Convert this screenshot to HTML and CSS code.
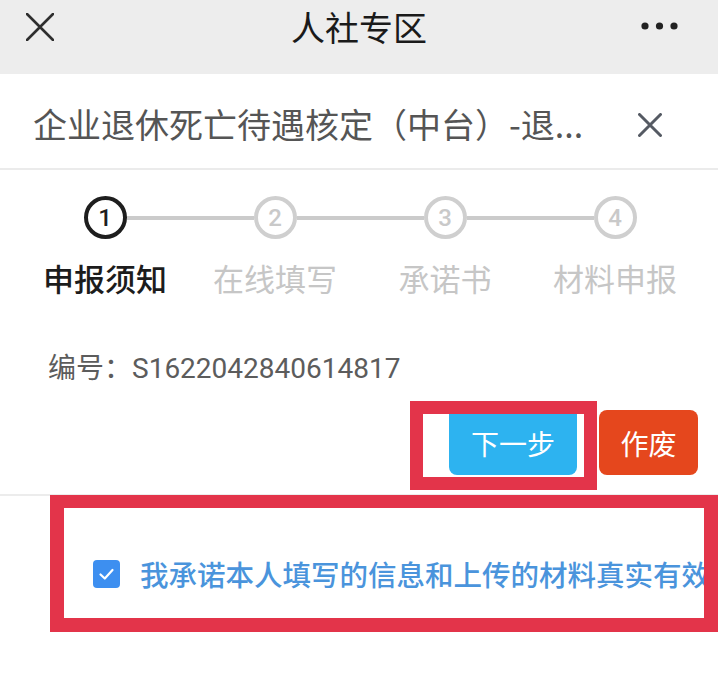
FILE: index.html
```html
<!DOCTYPE html>
<html lang="zh-CN">
<head>
<meta charset="utf-8">
<title>人社专区</title>
<link rel="stylesheet" href="styles.css">
</head>
<body>
<div class="page">
  <header class="topbar">
    <svg class="top-close" width="28" height="28" viewBox="0 0 28 28"><path d="M1 1 L27 27 M27 1 L1 27" stroke="#2e2e2e" stroke-width="2.6" stroke-linecap="round"/></svg>
    <div class="top-title">人社专区</div>
    <svg class="top-more" width="40" height="10" viewBox="0 0 40 10"><circle cx="5" cy="5" r="3.6" fill="#222"/><circle cx="19.5" cy="5" r="3.6" fill="#222"/><circle cx="34" cy="5" r="3.6" fill="#222"/></svg>
  </header>

  <div class="subhead">
    <div class="subhead-title">企业退休死亡待遇核定（中台）-退...</div>
    <svg class="sub-close" width="24" height="24" viewBox="0 0 24 24"><path d="M1.5 1.5 L22.5 22.5 M22.5 1.5 L1.5 22.5" stroke="#555a63" stroke-width="3" stroke-linecap="round"/></svg>
  </div>

  <div class="steps">
    <div class="step active">
      <div class="step-track"><span class="bar left"></span><span class="dot">1</span><span class="bar right on"></span></div>
      <div class="step-label">申报须知</div>
    </div>
    <div class="step">
      <div class="step-track"><span class="bar left on"></span><span class="dot">2</span><span class="bar right on"></span></div>
      <div class="step-label">在线填写</div>
    </div>
    <div class="step">
      <div class="step-track"><span class="bar left on"></span><span class="dot">3</span><span class="bar right on"></span></div>
      <div class="step-label">承诺书</div>
    </div>
    <div class="step">
      <div class="step-track"><span class="bar left on"></span><span class="dot">4</span><span class="bar right"></span></div>
      <div class="step-label">材料申报</div>
    </div>
  </div>

  <div class="serial">编号：<span class="num">S1622042840614817</span></div>

  <div class="actions">
    <button class="btn btn-next">下一步</button>
    <button class="btn btn-void">作废</button>
  </div>

  <div class="divider"></div>

  <div class="promise">
    <span class="checkbox"><svg width="27" height="28" viewBox="0 0 27 28"><path d="M7.5 14.5 L11.8 18.5 L19.5 10" stroke="#fff" stroke-width="2.2" fill="none" stroke-linecap="round" stroke-linejoin="round"/></svg></span>
    <span class="promise-text">我承诺本人填写的信息和上传的材料真实有效。</span>
  </div>

  <div class="mark mark-next"></div>
  <div class="mark mark-promise"></div>
</div>
</body>
</html>
```
FILE: styles.css
```css
html, body {
  margin: 0;
  padding: 0;
  background: #ffffff;
}
body {
  width: 718px;
  height: 676px;
  overflow: hidden;
  font-family: "Noto Sans CJK SC", Roboto, "Noto Sans", sans-serif;
}
.page {
  position: relative;
  width: 718px;
  height: 676px;
  overflow: hidden;
}
.topbar {
  height: 74px;
  background: #ededed;
  display: flex;
  align-items: center;
  justify-content: space-between;
  padding: 0 38px 0 26px;
  box-sizing: border-box;
  position: relative;
}
.top-close {
  margin-top: -21px;
}
.top-title {
  position: absolute;
  left: 0;
  right: 0;
  top: 5px;
  text-align: center;
  font-size: 34px;
  line-height: 44px;
  color: #1a1a1a;
  pointer-events: none;
}
.top-more {
  margin-top: -22px;
}
.subhead {
  height: 96px;
  border-bottom: 2px solid #ebebeb;
  box-sizing: border-box;
  display: flex;
  align-items: center;
  padding: 6px 56px 0 33px;
  justify-content: space-between;
}
.subhead-title {
  font-size: 34px;
  line-height: 44px;
  color: #555555;
  white-space: nowrap;
}
.sub-close {
  margin-top: 2px;
}
.steps {
  display: grid;
  grid-template-columns: repeat(4, 170px);
  padding: 26px 18px 0 20px;
}
.step {
  display: flex;
  flex-direction: column;
  align-items: center;
}
.step-track {
  display: flex;
  align-items: center;
  width: 100%;
  height: 43px;
}
.bar {
  flex: 1;
  height: 4px;
}
.bar.on {
  background: #cbcbcb;
}
.dot {
  width: 43px;
  height: 43px;
  box-sizing: border-box;
  border: 4px solid #cfcfcf;
  border-radius: 50%;
  display: flex;
  align-items: center;
  justify-content: center;
  font-family: Roboto, sans-serif;
  font-size: 24px;
  font-weight: 500;
  color: #c9c9c9;
}
.step.active .dot {
  border-color: #1e1e1e;
  color: #1e1e1e;
}
.step-label {
  margin-top: 18px;
  font-size: 31px;
  line-height: 42px;
  color: #c6c6c6;
  white-space: nowrap;
}
.step.active .step-label {
  color: #1c1c1c;
  font-weight: 500;
}
.serial {
  margin-top: 48px;
  padding-left: 48px;
  font-size: 28px;
  line-height: 38px;
  color: #5c5c5c;
}
.serial .num {
  font-family: Roboto, sans-serif;
  font-size: 28px;
}
.actions {
  display: flex;
  justify-content: flex-end;
  gap: 22px;
  padding-right: 20px;
  margin-top: 22px;
}
.btn {
  border: none;
  height: 65px;
  border-radius: 8px;
  color: #ffffff;
  font-family: "Noto Sans CJK SC", sans-serif;
  font-size: 28px;
  padding: 0;
}
.btn-next {
  width: 128px;
  background: #2db3f0;
  border-radius: 0 0 8px 8px;
}
.btn-void {
  width: 99px;
  background: #e5471d;
}
.divider {
  margin-top: 19px;
  height: 2px;
  background: #ececec;
}
.promise {
  display: flex;
  align-items: center;
  padding-left: 93px;
  margin-top: 58px;
  gap: 20px;
  white-space: nowrap;
}
.checkbox {
  width: 27px;
  height: 28px;
  border-radius: 4px;
  background: #3d8ff0;
  display: flex;
  flex: none;
}
.promise-text {
  font-size: 28.5px;
  font-weight: 500;
  color: #4a94dc;
  line-height: 40px;
}
.mark {
  position: absolute;
  border: 13px solid #e3344a;
  box-sizing: border-box;
}
.mark-next {
  left: 410px;
  top: 401px;
  width: 187px;
  height: 89px;
}
.mark-promise {
  left: 50px;
  top: 495px;
  width: 668px;
  height: 137px;
  border-width: 13px 14px 14px 14px;
}
```
